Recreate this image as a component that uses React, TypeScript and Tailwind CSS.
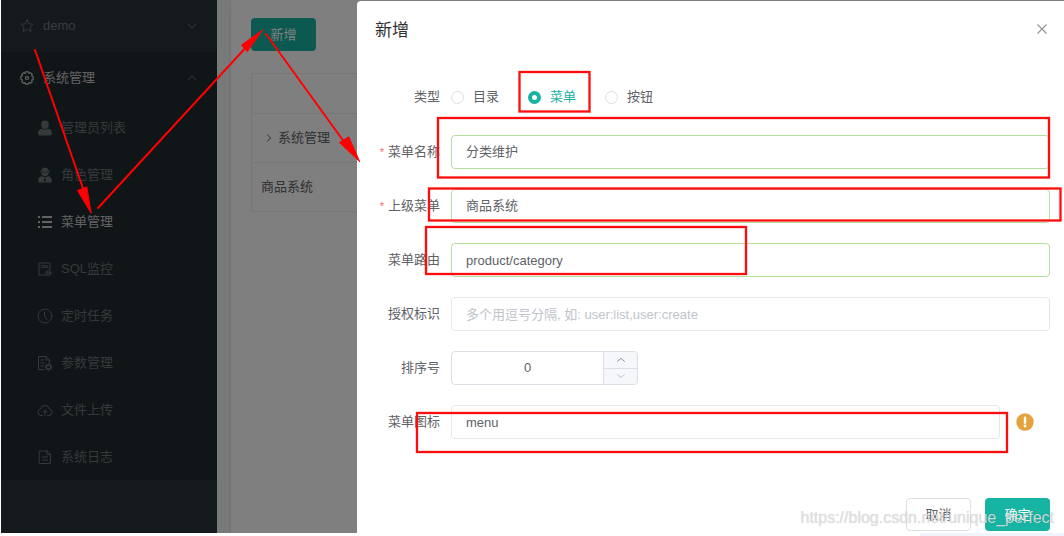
import { useState } from "react";
import type { ReactNode } from "react";

const line = {
  width: 16,
  height: 16,
  viewBox: "0 0 16 16",
  fill: "none",
  stroke: "currentColor",
  strokeWidth: 1,
  strokeLinecap: "round" as const,
  strokeLinejoin: "round" as const,
  "aria-hidden": true,
};

const StarIcon = () => (
  <svg {...line} width={14} height={14} className="mx-px">
    <path d="M8 1l2.100 4.500 4.900.6-3.600 3.400.9 4.900L8 12l-4.300 2.400.9-4.900L1 6.100l4.900-.6z" />
  </svg>
);

const GearIcon = () => (
  <svg {...line} width={14} height={14} className="mx-px" strokeWidth={1.4}>
    <path d="M6.300 1h3.400l.6 1.700 1.700-.7 2 2-.7 1.700 1.700.6v3.400l-1.700.6.7 1.700-2 2-1.700-.7-.6 1.700H6.300l-.6-1.700-1.700.7-2-2 .7-1.700L1 9.700V6.300l1.700-.6L2 4l2-2 1.700.7z" />
    <circle cx="8" cy="8" r="1.700" />
  </svg>
);

const UserIcon = () => (
  <svg {...line} fill="currentColor" stroke="none">
    <ellipse cx="8" cy="4.700" rx="3.700" ry="4.200" />
    <path d="M1 13.200c0-2.500 1.500-4 4-4.400 1.800 1.400 4.200 1.400 6 0 2.500.4 4 1.900 4 4.400 0 1.400-.7 2.300-2 2.300H3c-1.300 0-2-.9-2-2.300z" />
  </svg>
);

const RoleIcon = () => (
  <svg {...line} fill="currentColor" stroke="none">
    <path d="M4.800 3.300L5.400 1.300 8 .6l2.600.7.6 2 1.600.5v.9H3.200v-.9z" />
    <path d="M4.200 5.200h7.600c0 2.300-1.500 4-3.800 4s-3.800-1.700-3.800-4z" />
    <path fillRule="evenodd" d="M4.500 8.900L8 10.600l3.500-1.700c2.200.6 3.300 2.300 3.300 4.600v1.900H1.200v-1.900C1.200 11.200 2.300 9.500 4.500 8.900zM7.400 11.500l-.4 2.300L8 14.800l1-1-.4-2.300z" />
  </svg>
);

const ListIcon = () => (
  <svg {...line} strokeWidth={1.8} strokeLinecap="butt">
    <path d="M1 3h2M5 3h10M1 8h2M5 8h10M1 13h2M5 13h10" />
  </svg>
);

const SqlIcon = () => (
  <svg {...line}>
    <path d="M8.500 14H2V2h11v6.500M4 4.500h1.200M4 6.500h1.200M7 4.500h1.200v2H7zM10 4.500v2h1.200" />
    <circle cx="11.500" cy="12" r="2.600" />
    <circle cx="11.500" cy="12" r="1" />
  </svg>
);

const ClockIcon = () => (
  <svg {...line}>
    <circle cx="8" cy="8" r="7" />
    <path d="M7.500 4v4.300l2.500 3" />
  </svg>
);

const ConfigIcon = () => (
  <svg {...line}>
    <path d="M7 14.500H1.500v-13H9L12.500 5v3M9 1.500V5h3.500M4 5h2.500M4 8h4M4 11h2.500" />
    <circle cx="11.500" cy="12" r="2.300" strokeWidth="1.500" />
    <path d="M11.500 8.700v1M11.500 14.300v1M8.200 12h1M13.800 12h1M9.200 9.700l.7.7M13.100 13.600l.7.7M13.800 9.700l-.7.7M9.200 14.300l.7-.7" />
  </svg>
);

const UploadIcon = () => (
  <svg {...line}>
    <path d="M5.500 13.500H4a3.200 3.200 0 0 1-.6-6.300 4.700 4.700 0 0 1 9.200 0A3.200 3.200 0 0 1 12 13.500h-1.500M8 13.500v-5M6 10.200l2-2 2 2" />
  </svg>
);

const LogIcon = () => (
  <svg {...line}>
    <path d="M2.500 2h7.700L13.500 5.300V14.500h-11zM10 2v3.500h3.500M5.300 8h5.400M5.300 11h5.400" />
  </svg>
);

type ChevronProps = { dir: "up" | "down" | "right"; className?: string };
const chevrons = { up: "M1.500 8L6 4l4.500 4", down: "M1.500 4L6 8l4.500-4", right: "M4 2l4 4-4 4" };
const Chevron = ({ dir, className }: ChevronProps) => (
  <svg className={className} width="10" height="10" viewBox="0 0 12 12" fill="none" stroke="currentColor" strokeWidth="1.200" aria-hidden="true">
    <path d={chevrons[dir]} />
  </svg>
);

const menu: { label: string; icon: ReactNode; active?: boolean }[] = [
  { label: "管理员列表", icon: <UserIcon /> },
  { label: "角色管理", icon: <RoleIcon /> },
  { label: "菜单管理", icon: <ListIcon />, active: true },
  { label: "SQL监控", icon: <SqlIcon /> },
  { label: "定时任务", icon: <ClockIcon /> },
  { label: "参数管理", icon: <ConfigIcon /> },
  { label: "文件上传", icon: <UploadIcon /> },
  { label: "系统日志", icon: <LogIcon /> },
];

function Sidebar() {
  return (
    <nav className="w-[216px] shrink-0 bg-[#263238] text-[#75797b]">
      <a href="#demo" className="flex h-[52px] items-center gap-2 pr-5 pl-[18px]">
        <StarIcon />
        <span className="flex-1">demo</span>
        <Chevron dir="down" />
      </a>
      <div className="bg-[#202b30]">
        <a href="#system" className="flex h-[52px] items-center gap-2 pr-5 pl-[18px] text-[#c4c6c7]">
          <GearIcon />
          <span className="flex-1">系统管理</span>
          <Chevron dir="up" className="text-[#75797b]" />
        </a>
        <ul>
          {menu.map((item) => (
            <li key={item.label}>
              <a
                href={`#${item.label}`}
                className={`flex h-[47px] items-center gap-2 pl-9 ${item.active ? "text-[#c4c6c7]" : "text-[#6c7275]"}`}
              >
                {item.icon}
                {item.label}
              </a>
            </li>
          ))}
        </ul>
      </div>
    </nav>
  );
}

function MenuTable() {
  return (
    <main className="min-w-0 flex-1 bg-[#f1f4f5] pl-[14px]">
      <div className="h-full bg-white pt-[18px] pl-5 shadow-md">
        <button type="button" className="h-[33px] w-[65px] rounded bg-[#17b3a3] text-white">
          新增
        </button>
        <table className="mt-[22px] w-full border-collapse border border-[#ebeef5] text-[#606266]">
          <tbody>
            <tr className="h-10 border-b border-[#ebeef5]">
              <td />
            </tr>
            <tr className="h-[49px] border-b border-[#ebeef5]">
              <td>
                <span className="flex items-center gap-1 pl-3">
                  <Chevron dir="right" />
                  系统管理
                </span>
              </td>
            </tr>
            <tr className="h-[49px]">
              <td className="pl-[9px]">商品系统</td>
            </tr>
          </tbody>
        </table>
      </div>
    </main>
  );
}

type FieldProps = { id: string; label: string; required?: boolean; children: ReactNode };
function Field({ id, label, required, children }: FieldProps) {
  return (
    <div className="flex h-[34px] items-center gap-[11px]">
      <label htmlFor={id} className="w-[65px] shrink-0 text-right whitespace-nowrap">
        {required && <span className="mr-1 text-[11px] text-[#f56c6c]">*</span>}
        {label}
      </label>
      {children}
    </div>
  );
}

const inputBase = "h-[34px] min-w-0 flex-1 rounded border border-solid bg-white px-[14px] text-[#606266] outline-none placeholder:text-[#c0c4cc]";
const valid = "border-[#b5df9f]";
const plain = "border-[#e4e7ed]";

function MenuDialog() {
  const [kind, setKind] = useState("菜单");
  const [order, setOrder] = useState(0);
  return (
    <section role="dialog" aria-label="新增" className="mt-px min-w-0 flex-1 rounded-tl-sm bg-white text-[#606266]">
      <header className="flex h-[60px] items-center justify-between pr-[14px] pl-[18px]">
        <h2 className="text-[17px] text-[#303133]">新增</h2>
        <button type="button" aria-label="关闭" className="mb-1 flex h-4 w-4 items-center justify-center text-[#909399]">
          <svg width="12" height="12" viewBox="0 0 12 12" stroke="currentColor" strokeWidth="1.100" aria-hidden="true">
            <path d="M1.500 1.500l9 9M10.500 1.500l-9 9" />
          </svg>
        </button>
      </header>
      <form className="pr-[14px] pl-[18px]">
        <fieldset className="mt-[19px] flex h-[34px] items-center gap-[11px]">
          <span className="w-[65px] text-right">类型</span>
          <div className="flex gap-[29px]">
            {["目录", "菜单", "按钮"].map((k) => (
              <label key={k} className={`flex items-center gap-[9px] ${kind === k ? "text-[#17b3a3]" : ""}`}>
                <input
                  type="radio"
                  name="kind"
                  checked={kind === k}
                  onChange={() => setKind(k)}
                  className="h-[13px] w-[13px] appearance-none rounded-full border border-[#dcdfe6] bg-white checked:border-4 checked:border-[#17b3a3]"
                />
                {k}
              </label>
            ))}
          </div>
        </fieldset>
        <div className="mt-[21px] flex flex-col gap-5">
          <Field id="name" label="菜单名称" required>
            <input id="name" defaultValue="分类维护" className={`${inputBase} ${valid} pb-1`} />
          </Field>
          <Field id="parent" label="上级菜单" required>
            <input id="parent" defaultValue="商品系统" className={`${inputBase} ${valid} pb-1`} />
          </Field>
          <Field id="route" label="菜单路由">
            <input id="route" defaultValue="product/category" className={`${inputBase} ${valid}`} />
          </Field>
          <Field id="perms" label="授权标识">
            <input id="perms" placeholder="多个用逗号分隔, 如: user:list,user:create" className={`${inputBase} ${plain}`} />
          </Field>
          <Field id="order" label="排序号">
            <div className="flex h-[34px] w-[187px] overflow-hidden rounded border border-[#dcdfe6]">
              <input
                id="order"
                value={order}
                onChange={(e) => setOrder(Number(e.target.value) || 0)}
                className="min-w-0 flex-1 text-center outline-none"
              />
              <div className="flex w-[34px] flex-col border-l border-[#dcdfe6] bg-[#f5f7fa]">
                <button type="button" aria-label="增加" onClick={() => setOrder(order + 1)} className="flex flex-1 items-center justify-center border-b border-[#dcdfe6] text-[#909399]">
                  <Chevron dir="up" />
                </button>
                <button type="button" aria-label="减少" onClick={() => setOrder(Math.max(0, order - 1))} className="flex flex-1 items-center justify-center text-[#c0c4cc]">
                  <Chevron dir="down" />
                </button>
              </div>
            </div>
          </Field>
          <Field id="icon" label="菜单图标">
            <input id="icon" defaultValue="menu" className={`${inputBase} ${plain}`} />
            <svg className="mr-4 ml-[5px] shrink-0" width="18" height="18" viewBox="0 0 18 18" aria-hidden="true">
              <circle cx="9" cy="9" r="8.700" fill="#e6a23c" />
              <path d="M9 4.700v5" stroke="#fff" strokeWidth="2.400" strokeLinecap="round" />
              <circle cx="9" cy="13" r="1.400" fill="#fff" />
            </svg>
          </Field>
        </div>
      </form>
      <footer className="mt-[59px] flex justify-end gap-[14px] pr-[14px]">
        <button type="button" className="h-[33px] w-[65px] rounded border border-[#dcdfe6] bg-white">
          取消
        </button>
        <button type="button" className="h-[33px] w-[65px] rounded bg-[#17b3a3] text-white">
          确定
        </button>
      </footer>
    </section>
  );
}

function Annotations() {
  return (
    <svg className="pointer-events-none absolute top-0 left-0" width="1064" height="536" fill="none" stroke="#ff0c0c" strokeWidth="2.300" aria-hidden="true">
      <rect x="519.500" y="72" width="70" height="39.500" />
      <rect x="438" y="118" width="611" height="59.500" />
      <rect x="429" y="188.500" width="631.500" height="32" />
      <rect x="426" y="227" width="320" height="47" />
      <rect x="417" y="413" width="590" height="39" />
      <g stroke="#ff0000" strokeWidth="2" strokeLinecap="round">
        <path d="M35 50L87 200M98 208L250 43M266 34L350 150" />
        <g fill="#ff0000" stroke="#ff0000" strokeWidth="1" strokeLinejoin="round">
          <path d="M91 213L77.500 190.500L86.500 187z" />
          <path d="M262.500 30L241.500 45L247 51.500z" />
          <path d="M359.500 161.500L339.500 142.500L348.500 137z" />
        </g>
      </g>
    </svg>
  );
}

export default function App() {
  return (
    <div className="relative flex min-h-screen flex-col overflow-hidden bg-white font-['Liberation_Sans','Noto_Sans_CJK_SC',sans-serif] text-[13px] leading-5">
      <div className="relative flex flex-1 overflow-hidden pl-px">
        <Sidebar />
        <MenuTable />
        <div className="absolute inset-0 left-px flex bg-black/50 pl-[356px]">
          <MenuDialog />
        </div>
      </div>
      <div className="flex h-[3px] justify-end">
        <div className="w-36 bg-[#f0f4fd]" />
      </div>
      <Annotations />
      <p className="pointer-events-none absolute right-[10px] bottom-2 text-[16px] text-[#e2e2e2]/90 [text-shadow:0_0_1px_#00000033]">
        https://blog.csdn.net/unique_perfect
      </p>
    </div>
  );
}
